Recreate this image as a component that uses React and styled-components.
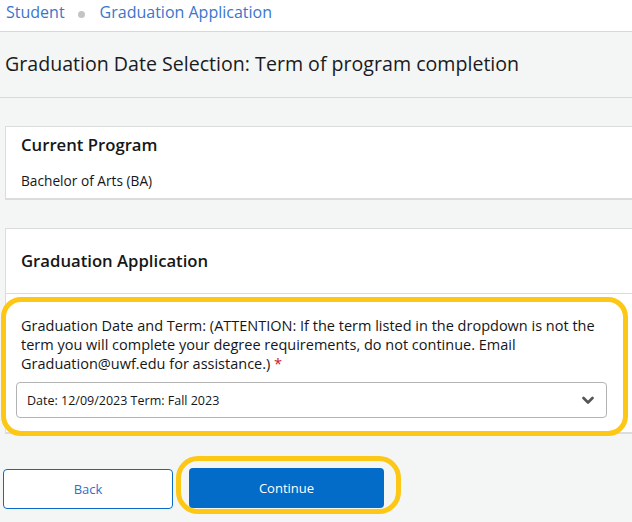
import React from "react";
import styled, { createGlobalStyle } from "styled-components";

const Global = createGlobalStyle`
  html, body { margin: 0; padding: 0; }
  body {
    background: #f4f5f5;
    font-family: "Open Sans", "Noto Sans", sans-serif;
    color: #151618;
    overflow: hidden;
    width: 632px;
    height: 522px;
  }
`;

const TopBar = styled.div`
  height: 31px;
  background: #fff;
  border-bottom: 1px solid #d9d9d9;
  display: flex;
  align-items: center;
  padding-left: 6px;
  gap: 13px;
`;

const Crumb = styled.a`
  font-size: 16px;
  color: #3a76cc;
  text-decoration: none;
  line-height: 22px;
  margin-top: -8px;
`;

const Dot = styled.span`
  width: 7px;
  height: 7px;
  border-radius: 50%;
  background: #c4c4c4;
  margin: -2px 2px 0 0;
`;

const Header = styled.div`
  height: 65px;
  border-bottom: 1px solid #d8d8d8;
  display: flex;
  align-items: center;
  padding-left: 5px;
`;

const Title = styled.h1`
  margin: -2px 0 0;
  font-size: 19.6px;
  font-weight: 400;
  color: #1a1b1d;
`;

const Content = styled.div`
  padding: 28px 0 0 5px;
  display: flex;
  flex-direction: column;
`;

const Card = styled.section`
  background: #fff;
  border: 1px solid #dcdcdc;
  border-bottom-width: 2px;
  margin-right: -10px;
  margin-bottom: ${(p) => p.$mb || 0}px;
`;

const CardTitle = styled.h2`
  margin: 0;
  font-size: 16.7px;
  font-weight: 600;
  line-height: 22px;
  color: #151618;
`;

const SmallHead = styled.div`
  padding: 7px 15px 0;
`;

const BodyText = styled.div`
  font-size: 13.7px;
  line-height: 18px;
  padding: 16px 15px 8px;
`;

const BigHead = styled.div`
  height: 64px;
  display: flex;
  align-items: center;
  padding: 0 15px;
  border-bottom: 1px solid #dcdcdc;
`;

const Highlight = styled.div`
  margin: 3px 13px -4px -5px;
  border: 5px solid #fdc716;
  border-radius: 20px;
  padding: 14px 16px 13px 10px;
  background: #fff;
  position: relative;
`;

const Label = styled.label`
  display: block;
  font-size: 14.5px;
  line-height: 19px;
  padding-left: 5px;
  margin-bottom: 9px;
  color: #151618;
`;

const Required = styled.span`
  color: #c8102e;
`;

const Select = styled.div`
  height: 36px;
  box-sizing: border-box;
  border: 1px solid #b3b3b3;
  border-radius: 4px;
  display: flex;
  align-items: center;
  justify-content: space-between;
  padding: 0 12px 0 10px;
  font-size: 12.5px;
  color: #151618;
`;

const Actions = styled.div`
  display: flex;
  align-items: flex-start;
  gap: 3px;
  margin: 22px 0 0 -2px;
`;

const BackButton = styled.button`
  width: 170px;
  height: 40px;
  margin-top: 13px;
  background: #fff;
  border: 1px solid #0a6bc6;
  border-radius: 4px;
  color: #2f6fcc;
  font-family: inherit;
  font-size: 13px;
`;

const Ring = styled.div`
  border: 5px solid #fdc716;
  border-radius: 22px;
  padding: 7px 12px 1px 8px;
  display: flex;
`;

const PrimaryButton = styled.button`
  width: 195px;
  height: 40px;
  background: #036bc8;
  border: none;
  border-radius: 4px;
  color: #fff;
  font-family: inherit;
  font-size: 13px;
`;

const Chevron = () => (
  <svg width="12" height="9" viewBox="0 0 12 9">
    <polyline
      points="1.5,2 6,6.5 10.5,2"
      fill="none"
      stroke="#555"
      strokeWidth="2.6"
      strokeLinecap="round"
      strokeLinejoin="round"
    />
  </svg>
);

export default function App() {
  return (
    <>
      <Global />
      <TopBar>
        <Crumb>Student</Crumb>
        <Dot />
        <Crumb>Graduation Application</Crumb>
      </TopBar>
      <Header>
        <Title>Graduation Date Selection: Term of program completion</Title>
      </Header>
      <Content>
        <Card $mb={28}>
          <SmallHead>
            <CardTitle>Current Program</CardTitle>
          </SmallHead>
          <BodyText>Bachelor of Arts (BA)</BodyText>
        </Card>
        <Card>
          <BigHead>
            <CardTitle>Graduation Application</CardTitle>
          </BigHead>
          <Highlight>
            <Label>
              Graduation Date and Term: (ATTENTION: If the term listed in the dropdown is not the
              term you will complete your degree requirements, do not continue. Email
              Graduation@uwf.edu for assistance.) <Required>*</Required>
            </Label>
            <Select>
              <span>Date: 12/09/2023 Term: Fall 2023</span>
              <Chevron />
            </Select>
          </Highlight>
        </Card>
        <Actions>
          <BackButton>Back</BackButton>
          <Ring>
            <PrimaryButton>Continue</PrimaryButton>
          </Ring>
        </Actions>
      </Content>
    </>
  );
}
